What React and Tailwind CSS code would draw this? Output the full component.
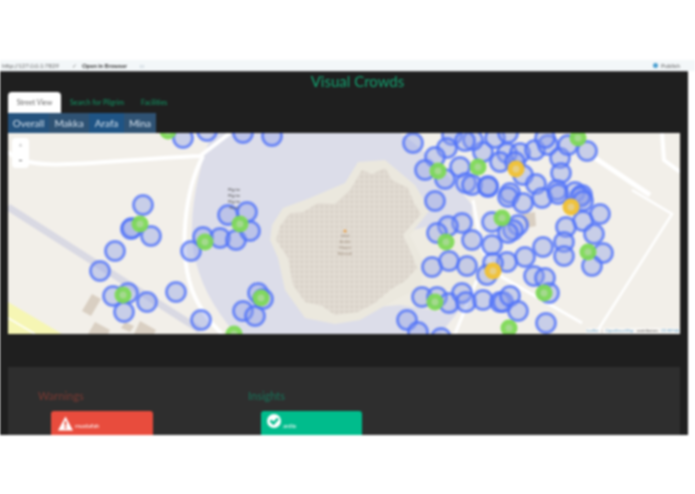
import React from 'react';

const pins = [
  [183,138],[207,131],[243,133],[272,136],[143,205],[132,228],[131,229],[151,236],[115,251],[100,271],[113,296],[128,293],[147,302],[124,312],[176,292],[201,320],[191,251],[203,237],[220,238],[236,240],[250,231],[247,212],[228,215],[243,311],[255,316],[258,293],[263,299],
  [413,143],[452,135],[447,148],[435,157],[425,170],[445,179],[460,167],[466,183],[472,185],[488,187],[488,186],[483,152],[473,140],[465,141],[495,138],[508,133],[507,153],[500,162],[520,153],[515,162],[523,175],[535,150],[548,145],[545,138],[560,158],[561,173],[568,145],[587,151],[536,184],[557,190],[575,192],[582,195],[510,193],
  [435,201],[508,197],[523,203],[542,198],[558,194],[580,197],[583,201],[600,214],[583,221],[566,227],[594,234],[564,242],[564,256],[603,253],[592,266],[543,247],[525,257],[507,262],[492,245],[472,240],[462,223],[448,226],[437,233],[432,267],[449,261],[467,266],[493,263],[487,275],[492,222],[518,225],[513,230],[508,233],[534,276],[545,278],[549,293],[422,297],[437,297],[449,303],[462,293],[466,302],[483,300],[500,302],[503,302],[510,296],[518,311],[407,320],[418,332],[441,338],[546,323],
];
const greens = [[168,131],[140,224],[123,295],[205,242],[240,224],[261,298],[234,334],[438,171],[478,167],[578,138],[588,252],[446,242],[502,218],[544,293],[435,302],[509,328]];
const ambers = [[516,169],[571,207],[493,271]];

const CrowdMap = () => (
  <svg viewBox="8 133 672 201" className="block w-full h-full">
    <defs>
      <pattern id="rock" width="5" height="5" patternUnits="userSpaceOnUse">
        <rect width="5" height="5" fill="#dfd9d0" />
        <rect x="1" y="1" width="1.5" height="1.5" fill="#cfc7bc" />
        <rect x="3.5" y="3" width="1.5" height="1.5" fill="#e9e4dc" />
      </pattern>
    </defs>
    <rect x="8" y="133" width="672" height="201" fill="#f2efe9" />
    {/* water */}
    <path d="M212 133 L400 133 C425 150 445 170 472 205 L476 290 L440 334 L236 334 C205 300 190 260 192 225 C193 195 200 165 212 133 Z" fill="#dcdde9" />
    {/* land east of the island */}
    <path d="M405 232 L445 222 L470 215 L490 280 L445 312 L400 305 L365 308 Z" fill="#eeebe2" />
    {/* island */}
    <path d="M272 225 L283 208 L310 198 L345 183 L358 162 L385 160 L415 185 L430 210 L410 235 L425 265 L420 288 L395 300 L360 320 L335 324 L305 318 L285 290 L278 258 L270 240 Z" fill="#ebe8de" />
    <path d="M280 226 L290 213 L303 212 L318 203 L335 204 L350 190 L362 170 L372 174 L385 168 L392 180 L408 188 L414 203 L421 214 L403 235 L410 250 L417 268 L405 281 L390 290 L375 303 L358 312 L335 315 L322 306 L305 302 L293 285 L288 258 L276 240 Z" fill="url(#rock)" />
    {/* roads */}
    <path d="M8 152 C30 175 100 160 200 156 L230 133" fill="none" stroke="#ffffff" strokeWidth="4" />
    <path d="M203 156 C185 190 178 250 192 290 C200 310 210 322 222 334" fill="none" stroke="#ffffff" strokeWidth="4" />
    <path d="M8 207 L200 330" fill="none" stroke="#d9d9e3" strokeWidth="7" />
    <path d="M473 200 L482 250 L502 277 L582 323 M477 280 L455 334" fill="none" stroke="#ffffff" strokeWidth="3" />
    <path d="M632 190 L672 214 L598 330" fill="none" stroke="#ffffff" strokeWidth="2.5" />
    <path d="M595 158 L650 195" fill="none" stroke="#ffffff" strokeWidth="5" />
    <path d="M662 133 L664 160 L680 172" fill="none" stroke="#ffffff" strokeWidth="4" />
    {/* corner patch and buildings */}
    <path d="M8 302 L62 334 L8 334 Z" fill="#f6f6b4" />
    <path d="M8 318 L35 334" stroke="#ffffff" strokeWidth="1.5" />
    <path d="M92 294 L101 299 L91 316 L82 311 Z M95 322 L110 330 L108 334 L88 334 Z M140 321 L156 330 L154 334 L134 334 Z M125 322 L134 326 L130 332 L121 328 Z M522 214 L535 212 L536 226 L526 228 Z" fill="#d9cfc2" />
    {pins.map(([x, y], i) => (
      <circle key={i} cx={x} cy={y} r="9.5" fill="#8f9fe8" fillOpacity="0.42" stroke="#4f72fa" strokeOpacity="0.75" strokeWidth="3" />
    ))}
    {greens.map(([x, y], i) => (
      <circle key={i} cx={x} cy={y} r="8.5" fill="#7ed957" fillOpacity="0.95" />
    ))}
    {greens.map(([x, y], i) => (
      <circle key={i} cx={x} cy={y} r="3.5" fill="#a5d98f" />
    ))}
    {ambers.map(([x, y], i) => (
      <circle key={i} cx={x} cy={y} r="8.5" fill="#efc23c" />
    ))}
    {ambers.map(([x, y], i) => (
      <circle key={i} cx={x} cy={y} r="3.5" fill="#e8cf83" />
    ))}
    <g fill="#555" fontSize="4" textAnchor="middle" fontFamily="Lato, sans-serif">
      <text x="234" y="191">Pilgrim</text>
      <text x="234" y="197">Pilgrim</text>
      <text x="234" y="203">Pilgrim</text>
      <text x="234" y="209">Road</text>
    </g>
    <g fill="#9c8a78" fontSize="4" textAnchor="middle" fontFamily="Lato, sans-serif">
      <text x="345" y="237">Jabal</text>
      <text x="345" y="243">Arafat</text>
      <text x="345" y="249">Mount</text>
      <text x="345" y="255">Rahmah</text>
    </g>
    <circle cx="345" cy="231" r="1.5" fill="#e8a04a" />
  </svg>
);

export default function App() {
  return (
    <div className="h-[494px] w-[695px] overflow-hidden bg-white font-['Lato',sans-serif] blur-[0.8px]">
      <div className="h-[60px]" />
      <div className="flex h-[11px] items-center justify-between bg-[#f3f7f9] pl-[2px] pr-[15px] text-[6px] text-[#666]">
        <div className="flex items-center">
          <span className="w-[70px]">http://127.0.0.1:7829</span>
          <span className="w-[10px] text-[#888]">✓</span>
          <span className="w-[58px] font-bold text-[#333]">Open in Browser</span>
          <span className="text-[#9ab]">□</span>
        </div>
        <div className="flex items-center gap-[3px]">
          <span className="h-[5px] w-[5px] rounded-full bg-[#4a9fd0]" />
          <span>Publish</span>
        </div>
      </div>
      <main className="h-[364px] w-[688px] overflow-hidden border-t border-[#555] bg-[#1f1f1f]">
        <h1 className="h-[20px] pl-[27px] text-center text-[15px] leading-[19px] text-[#13a06f]">Visual Crowds</h1>
        <div className="flex h-[21px] items-end pl-2 text-[7px]">
          <div className="flex h-[21px] w-[53px] items-center justify-center rounded-t-sm bg-white text-[#666]">Street View</div>
          <div className="flex h-[21px] items-center pl-[9px] text-[#0f9a66]">Search for Pilgrim</div>
          <div className="flex h-[21px] items-center pl-[17px] text-[#0f9a66]">Facilities</div>
        </div>
        <div className="flex h-[20px] pl-2 text-[10px] text-[#d5e2ee]">
          <div className="flex w-[41px] items-center justify-center bg-[#24527d]">Overall</div>
          <div className="flex w-[40px] items-center justify-center bg-[#2f5273]">Makka</div>
          <div className="flex w-[35px] items-center justify-center bg-[#1f5485]">Arafa</div>
          <div className="flex w-[32px] items-center justify-center bg-[#2f5273]">Mina</div>
        </div>
        <div className="relative ml-2 h-[201px] w-[672px] overflow-hidden">
          <CrowdMap />
          <div className="absolute left-[4px] top-[5px] flex h-[30px] w-[17px] flex-col items-center rounded-sm bg-white text-[7px] leading-[15px]">
            <span className="text-[#aaa]">+</span>
            <span className="font-bold text-[#333]">−</span>
          </div>
          <div className="absolute bottom-0 right-0 flex gap-[3px] bg-white/50 px-[1px] text-[4px] leading-[6px] text-[#555]">
            <span className="text-[#5a9bc8]">Leaflet</span>
            <span>|</span>
            <span className="text-[#5a9bc8]">OpenStreetMap</span>
            <span>contributors</span>
            <span className="text-[#5a9bc8]">CC-BY-SA</span>
          </div>
        </div>
        <section className="ml-2 mt-[33px] h-[68px] w-[672px] bg-[#2e2e2e]">
          <div className="flex pt-[22px]">
            <div className="ml-[30px] w-[210px]">
              <h2 className="h-[22px] text-[11px] leading-[14px] text-[#7c3a33]">Warnings</h2>
              <div className="ml-[13px] flex h-[24px] w-[102px] items-start gap-[2px] rounded-t-[3px] bg-[#e84c3d] pl-[7px] pt-[5px] text-[6px] text-white">
                <svg viewBox="0 0 16 15" className="h-[15px] w-[15px]">
                  <path d="M8 0 L16 15 L0 15 Z" fill="#fff" />
                  <rect x="7" y="5" width="2" height="5" fill="#e84c3d" />
                  <rect x="7" y="11" width="2" height="2" fill="#e84c3d" />
                </svg>
                <span className="pt-[5px]">mustafah</span>
              </div>
            </div>
            <div>
              <h2 className="h-[22px] text-[11px] leading-[14px] text-[#17745a]">Insights</h2>
              <div className="ml-[13px] flex h-[24px] w-[101px] items-start gap-[2px] rounded-t-[3px] bg-[#00bc8c] pl-[6px] pt-[3px] text-[6px] text-white">
                <svg viewBox="0 0 14 14" className="h-[14px] w-[14px]">
                  <circle cx="7" cy="7" r="7" fill="#fff" />
                  <path d="M3.5 6.5 L6.5 9.5 L11 4.5" fill="none" stroke="#00bc8c" strokeWidth="2.5" />
                </svg>
                <span className="pt-[7px]">ardlo</span>
              </div>
            </div>
          </div>
        </section>
      </main>
    </div>
  );
}
